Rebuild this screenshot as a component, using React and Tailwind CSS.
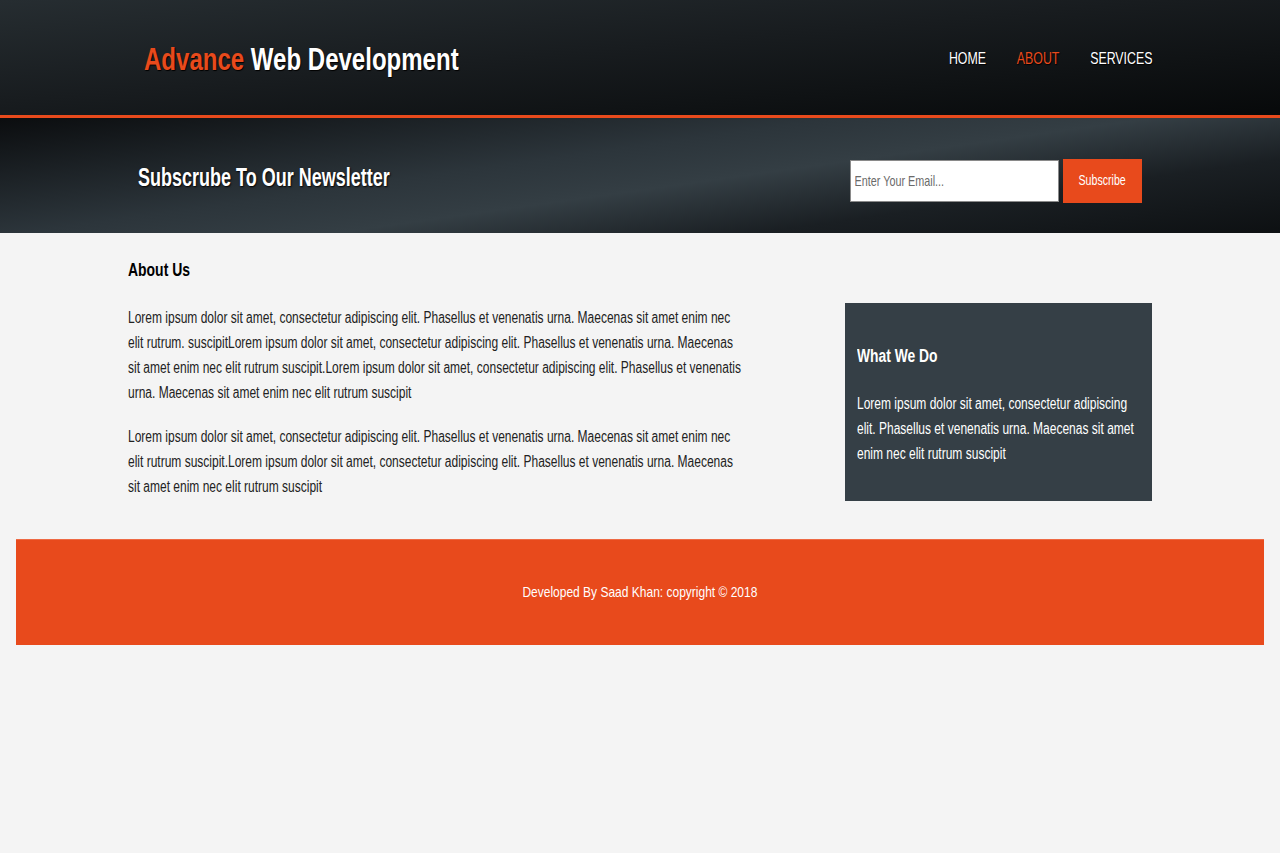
export default function App() {
  const font = "font-['Liberation_Sans',Arial,sans-serif]";
  const lorem1 =
    "Lorem ipsum dolor sit amet, consectetur adipiscing elit. Phasellus et venenatis urna. Maecenas sit amet enim nec elit rutrum. suscipitLorem ipsum dolor sit amet, consectetur adipiscing elit. Phasellus et venenatis urna. Maecenas sit amet enim nec elit rutrum suscipit.Lorem ipsum dolor sit amet, consectetur adipiscing elit. Phasellus et venenatis urna. Maecenas sit amet enim nec elit rutrum suscipit";
  const lorem2 =
    "Lorem ipsum dolor sit amet, consectetur adipiscing elit. Phasellus et venenatis urna. Maecenas sit amet enim nec elit rutrum suscipit.Lorem ipsum dolor sit amet, consectetur adipiscing elit. Phasellus et venenatis urna. Maecenas sit amet enim nec elit rutrum suscipit";

  return (
    <div className={`min-h-[853px] bg-[#f4f4f4] ${font}`}>
      {/* header */}
      <header className="h-[115px] bg-[linear-gradient(175deg,#262d31_0%,#181c1f_45%,#07090a_100%)]">
        <div className="w-[1024px] mx-auto h-full flex items-center justify-between pl-4">
          <h1 className="text-[31px] font-bold text-white whitespace-nowrap origin-left scale-x-[0.775] [text-shadow:1px_1px_1px_#000] mt-[5px]">
            <span className="text-[#e84a1c]">Advance</span> Web Development
          </h1>
          <nav className="flex gap-[41px] text-[16.5px] text-white whitespace-nowrap origin-right scale-x-[0.75] [text-shadow:1px_1px_1px_#000] mt-[2px]">
            <a>HOME</a>
            <a className="text-[#e84a1c]">ABOUT</a>
            <a>SERVICES</a>
          </nav>
        </div>
      </header>
      <div className="h-[3px] bg-[#e84a1c]" />

      {/* newsletter */}
      <section className="h-[115px] bg-[linear-gradient(172deg,#0b0d0f_0%,#2c353b_40%,#343e44_55%,#1a1f23_75%,#0d1012_100%)]">
        <div className="w-[1024px] mx-auto h-full flex items-center justify-between pl-[10px] pr-[10px]">
          <h2 className="text-[25px] font-bold text-white whitespace-nowrap origin-left scale-x-[0.72] [text-shadow:1px_1px_2px_#000] mt-[4px]">
            Subscrube To Our Newsletter
          </h2>
          <form className="flex items-center gap-[4px] mt-[10px]">
            <div className="w-[209px] h-[42px] bg-white border border-[#8a8a8a] overflow-hidden">
              <input
                placeholder="Enter Your Email..."
                className="w-[285px] h-full px-[5px] bg-transparent origin-left scale-x-[0.72] text-[15px] text-[#555] placeholder:text-[#6a6a6a] outline-none"
              />
            </div>
            <button className="w-[79px] h-[44px] bg-[#e84a1c] text-white text-[14px] flex items-center justify-center">
              <span className="scale-x-[0.76] whitespace-nowrap">Subscribe</span>
            </button>
          </form>
        </div>
      </section>

      {/* content */}
      <main className="w-[1024px] mx-auto flex items-start justify-between pt-[24px] pb-[38px]">
        <div className="w-[617px]">
          <h3 className="text-[18px] font-bold text-black origin-left scale-x-[0.775] whitespace-nowrap mb-[21px]">
            About Us
          </h3>
          <p className="w-[823px] origin-left scale-x-[0.75] text-[16px] leading-[25px] text-[#222] mb-[19px]">
            {lorem1}
          </p>
          <p className="w-[823px] origin-left scale-x-[0.75] text-[16px] leading-[25px] text-[#222]">{lorem2}</p>
        </div>
        <aside className="w-[307px] h-[198px] mt-[46px] bg-[#353f46] text-white pl-3 pt-[40px] overflow-hidden">
          <h3 className="text-[18px] font-bold origin-left scale-x-[0.77] whitespace-nowrap mb-[21px]">What We Do</h3>
          <p className="w-[380px] origin-left scale-x-[0.75] text-[16px] leading-[25px]">
            Lorem ipsum dolor sit amet, consectetur adipiscing elit. Phasellus et venenatis urna. Maecenas sit amet
            enim nec elit rutrum suscipit
          </p>
        </aside>
      </main>

      {/* footer */}
      <footer className="mx-4 h-[106px] bg-[#e84a1c] border-t border-[#ee6a44] flex items-center justify-center text-white text-[15px]">
        <span className="scale-x-[0.8] whitespace-nowrap">Developed By Saad Khan: copyright © 2018</span>
      </footer>
    </div>
  );
}
